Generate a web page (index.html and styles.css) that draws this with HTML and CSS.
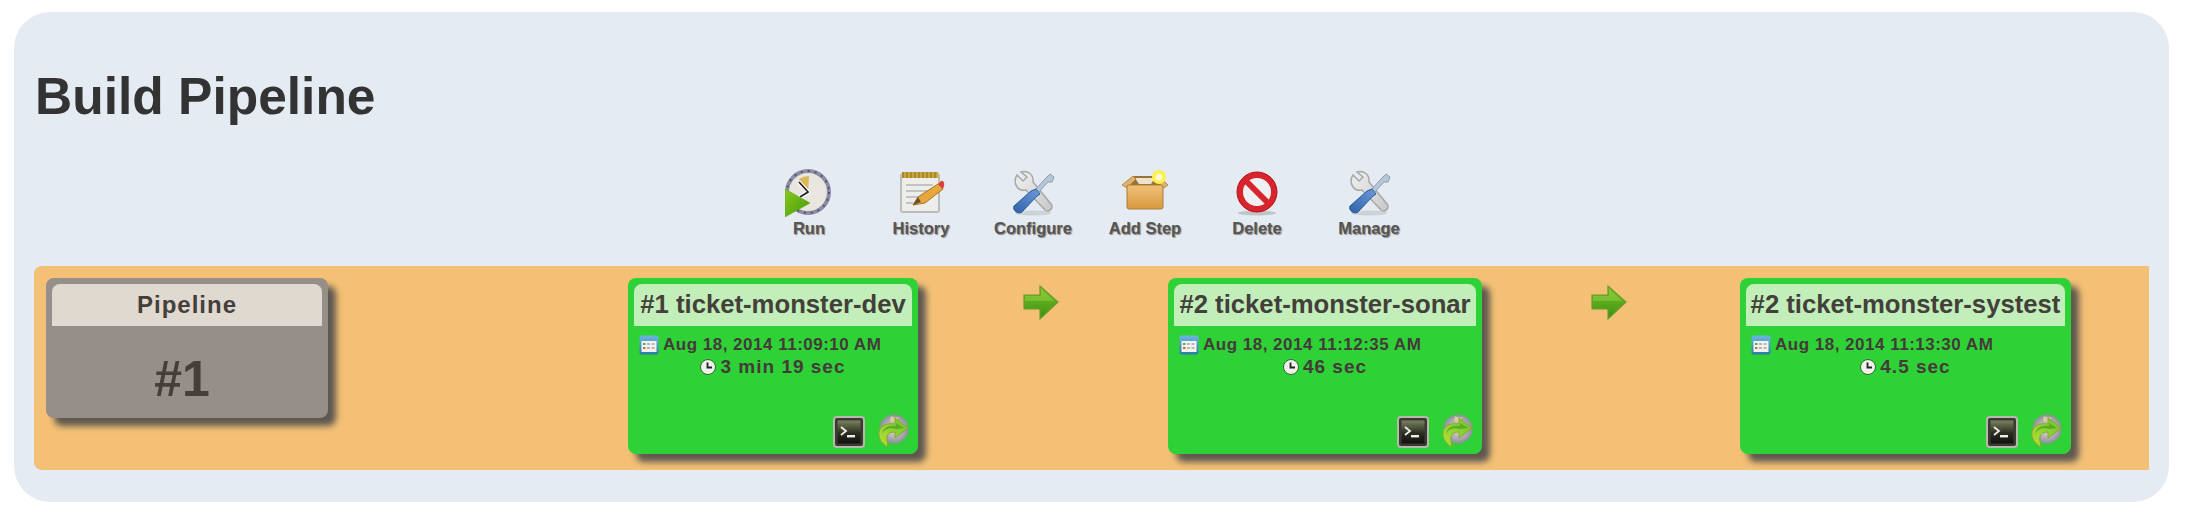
FILE: index.html
```html
<!DOCTYPE html>
<html lang="en">
<head>
<meta charset="utf-8">
<title>Build Pipeline</title>
<link rel="stylesheet" href="styles.css">
</head>
<body>
<svg class="defs" aria-hidden="true">
  <defs>
    <linearGradient id="gGreen" x1="0" y1="0" x2="1" y2="1"><stop offset="0" stop-color="#8cc820"/><stop offset="1" stop-color="#3f9a08"/></linearGradient>
    <linearGradient id="gArrow" x1="0" y1="0" x2="0" y2="1"><stop offset="0" stop-color="#7cc426"/><stop offset="1" stop-color="#3a9010"/></linearGradient>
    <linearGradient id="gBox" x1="0" y1="0" x2="0" y2="1"><stop offset="0" stop-color="#f0c078"/><stop offset="1" stop-color="#d8993f"/></linearGradient>
    <linearGradient id="gBlue" x1="0" y1="1" x2="1" y2="0"><stop offset="0" stop-color="#2f62a8"/><stop offset="1" stop-color="#6c9bd8"/></linearGradient>
    <linearGradient id="gSteel" x1="0" y1="0" x2="1" y2="1"><stop offset="0" stop-color="#f0f0f0"/><stop offset="1" stop-color="#c8c8c8"/></linearGradient>
    <linearGradient id="gTerm" x1="0" y1="0" x2="0" y2="1"><stop offset="0" stop-color="#7a8260"/><stop offset=".55" stop-color="#2b2e1f"/><stop offset="1" stop-color="#111"/></linearGradient>
    <linearGradient id="gCal" x1="0" y1="0" x2="0" y2="1"><stop offset="0" stop-color="#6cb6e0"/><stop offset="1" stop-color="#2a7ca8"/></linearGradient>
    <linearGradient id="gReplay" x1="1" y1="0" x2="0" y2="1"><stop offset="0" stop-color="#6cc42c"/><stop offset="1" stop-color="#b6e038"/></linearGradient>
    <radialGradient id="gGlobe"><stop offset="0" stop-color="#e2e2e2"/><stop offset="1" stop-color="#8f8f9a"/></radialGradient>
    <symbol id="ic-tools" viewBox="0 0 48 48">
      <ellipse cx="24" cy="44" rx="18" ry="2.5" fill="#cdd2d6"/>
      <path d="M8 6 L14 12 L18 8 L12 3 C18 1 25 5 24 13 L42 35 C45 39 40 44 36 41 L17 21 C9 23 3 14 8 6 Z" fill="url(#gSteel)" stroke="#a8a8a8" stroke-width="1.5"/>
      <path d="M41 5 L45 8 L43 13 L39 13 L29 24 L26 21 L36 10 Z" fill="#b6c6d8" stroke="#8c9cb0" stroke-width="1"/>
      <path d="M27 20 L31 25 L28 27 L13 43 C9 46 3 41 5 37 L22 22 Z" fill="url(#gBlue)" stroke="#2c5a98" stroke-width="1"/>
    </symbol>
    <symbol id="ic-arrow" viewBox="0 0 36 36">
      <path d="M1 11 H17 V2 L35 18 L17 35 V25 H1 Z" fill="url(#gArrow)" stroke="#6c9a2e" stroke-width="1.2"/>
      <path d="M2 12 H18 V5 L31 17 H2 Z" fill="#a8dc58" opacity=".35"/>
    </symbol>
    <symbol id="ic-term" viewBox="0 0 32 32">
      <rect x="1" y="1" width="30" height="30" rx="3" fill="#3a3a32" stroke="#b8b8ac" stroke-width="2"/>
      <rect x="4.5" y="4.5" width="23" height="23" fill="url(#gTerm)"/>
      <path d="M8 11 L13 15 L8 19" fill="none" stroke="#eee" stroke-width="1.8"/>
      <rect x="14" y="19" width="8" height="2.4" fill="#eee"/>
    </symbol>
    <symbol id="ic-replay" viewBox="0 0 32 34">
      <circle cx="17" cy="15" r="14.5" fill="url(#gGlobe)"/>
      <path d="M14 2 C17 4 19 4 22 3 L18 8 L13 7 Z" fill="#d9cf9a"/>
      <path d="M18 4 L31 14 L18 24 V18 C12 18 9 21 10 27 L11 33 C3 29 0 21 3 15 C6 10 12 9 18 10 Z" fill="url(#gReplay)" stroke="#8aa82a" stroke-width="1"/>
      <path d="M19 9 L27 14 L19 15 C11 13 7 16 5 20 C6 14 11 11 19 12 Z" fill="#46a420" opacity=".75"/>
    </symbol>
    <symbol id="ic-cal" viewBox="0 0 20 20">
      <rect x="0.5" y="0.5" width="19" height="19" rx="2" fill="url(#gCal)"/>
      <rect x="2.5" y="6" width="15" height="11" fill="#f3f3ee"/>
      <rect x="4" y="8" width="2.5" height="2" fill="#4caf50"/><rect x="8" y="8" width="3" height="2" fill="#b8b8b8"/><rect x="12.5" y="8" width="3" height="2" fill="#b8b8b8"/>
      <rect x="4" y="12" width="2.5" height="2" fill="#e0604c"/><rect x="8" y="12" width="3" height="2" fill="#b8b8b8"/><rect x="12.5" y="12" width="3" height="2" fill="#b8b8b8"/>
    </symbol>
    <symbol id="ic-clock" viewBox="0 0 16 16">
      <circle cx="8" cy="8" r="7.5" fill="#f0f0ea" stroke="#2f6a2c" stroke-width="1"/>
      <path d="M7.5 3.5 V8.5 H12" fill="none" stroke="#222" stroke-width="1.8"/>
    </symbol>
  </defs>
</svg>

<main class="panel">
  <h1 class="title">Build Pipeline</h1>

  <nav class="toolbar">
    <a class="tool">
      <svg class="tool-icon" viewBox="2 0 48 48">
        <circle cx="25" cy="23" r="21" fill="#e8e6de" stroke="#8d8ba6" stroke-width="4"/>
        <circle cx="25" cy="23" r="21" fill="none" stroke="#55536e" stroke-width="2" stroke-dasharray="2 5"/>
        <path d="M25 23 L16 10 A17 17 0 0 1 26 7 Z" fill="#d9b95a"/>
        <path d="M16 13 L25 23 L16 29" fill="none" stroke="#fff" stroke-width="4"/>
        <path d="M16 13 L25 23 L17 28" fill="none" stroke="#222" stroke-width="1.8"/>
        <path d="M2 20 L2 48 L27 34 Z" fill="url(#gGreen)" stroke="#6aa818" stroke-width=".6"/>
      </svg>
      <span class="tool-label">Run</span>
    </a>
    <a class="tool">
      <svg class="tool-icon" viewBox="0 0 48 48">
        <rect x="4" y="5" width="38" height="38" rx="2" fill="#ededeb" stroke="#bdbdb8" stroke-width="2"/>
        <rect x="5" y="3" width="36" height="6" fill="#c9a73f"/>
        <path d="M6 3 V9 M10 3 V9 M14 3 V9 M18 3 V9 M22 3 V9 M26 3 V9 M30 3 V9 M34 3 V9 M38 3 V9" stroke="#8f7722" stroke-width="1.2"/>
        <path d="M9 16 H36 M9 22 H30 M9 28 H22 M9 34 H16" stroke="#b5b5b5" stroke-width="1.5"/>
        <path d="M16 36 L21 28 L41 15 L46 20 L28 34 Z" fill="#e8a73c" stroke="#a87520" stroke-width="1"/>
        <path d="M41 15 L44 12 C46 11 48 14 47 17 L46 20 Z" fill="#e0403c"/>
        <path d="M16 36 L21 28 L24 33 Z" fill="#6a5030"/>
      </svg>
      <span class="tool-label">History</span>
    </a>
    <a class="tool">
      <svg class="tool-icon"><use href="#ic-tools"/></svg>
      <span class="tool-label">Configure</span>
    </a>
    <a class="tool">
      <svg class="tool-icon" viewBox="0 0 48 48">
        <path d="M5 18 L13 7 H36 L43 18 Z" fill="#9a7238"/>
        <path d="M14 9 H34 L30 15 H18 Z" fill="#e9e3d0"/>
        <path d="M1 16 L12 7 L15 10 L6 19 Z M47 16 L38 7 L34 10 L43 19 Z" fill="#e2b16a" stroke="#a97d3c" stroke-width=".8"/>
        <rect x="6" y="16" width="36" height="24" rx="2" fill="url(#gBox)" stroke="#a97d3c" stroke-width="1"/>
        <circle cx="38" cy="8" r="7" fill="#fff04a"/>
        <circle cx="38" cy="8" r="3.5" fill="#fffbd0"/>
      </svg>
      <span class="tool-label">Add Step</span>
    </a>
    <a class="tool">
      <svg class="tool-icon" viewBox="0 0 48 48">
        <ellipse cx="24" cy="44" rx="19" ry="2.5" fill="#bfc4c8"/>
        <circle cx="24" cy="23" r="17" fill="#eef0f2" stroke="#d8242c" stroke-width="6"/>
        <path d="M12 11 L36 35" stroke="#d8242c" stroke-width="6"/>
        <circle cx="24" cy="23" r="20" fill="none" stroke="#b5161e" stroke-width="1"/>
      </svg>
      <span class="tool-label">Delete</span>
    </a>
    <a class="tool">
      <svg class="tool-icon"><use href="#ic-tools"/></svg>
      <span class="tool-label">Manage</span>
    </a>
  </nav>

  <section class="pipeline">
    <article class="card card-head">
      <h2 class="card-title">Pipeline</h2>
      <div class="revision">#1</div>
    </article>

    <article class="card card-task">
      <h2 class="card-title">#1 ticket-monster-dev</h2>
      <p class="stamp"><svg class="cal"><use href="#ic-cal"/></svg>Aug 18, 2014 11:09:10 AM</p>
      <p class="duration"><svg class="clock"><use href="#ic-clock"/></svg>3 min 19 sec</p>
      <div class="actions"><svg class="term"><use href="#ic-term"/></svg><svg class="replay"><use href="#ic-replay"/></svg></div>
    </article>

    <svg class="arrow"><use href="#ic-arrow"/></svg>

    <article class="card card-task">
      <h2 class="card-title">#2 ticket-monster-sonar</h2>
      <p class="stamp"><svg class="cal"><use href="#ic-cal"/></svg>Aug 18, 2014 11:12:35 AM</p>
      <p class="duration"><svg class="clock"><use href="#ic-clock"/></svg>46 sec</p>
      <div class="actions"><svg class="term"><use href="#ic-term"/></svg><svg class="replay"><use href="#ic-replay"/></svg></div>
    </article>

    <svg class="arrow"><use href="#ic-arrow"/></svg>

    <article class="card card-task">
      <h2 class="card-title">#2 ticket-monster-systest</h2>
      <p class="stamp"><svg class="cal"><use href="#ic-cal"/></svg>Aug 18, 2014 11:13:30 AM</p>
      <p class="duration"><svg class="clock"><use href="#ic-clock"/></svg>4.5 sec</p>
      <div class="actions"><svg class="term"><use href="#ic-term"/></svg><svg class="replay"><use href="#ic-replay"/></svg></div>
    </article>
  </section>
</main>
</body>
</html>
```
FILE: styles.css
```css
* { box-sizing: border-box; }
html, body { margin: 0; background: #fff; }
body { font-family: "Liberation Sans", Arial, sans-serif; padding: 12px 17px 0 14px; }
.defs { position: absolute; width: 0; height: 0; }

.panel {
  height: 490px;
  background: #e4ebf2;
  border-radius: 36px;
  padding: 0 20px;
  display: flex;
  flex-direction: column;
}
.title {
  margin: 0;
  padding: 54px 0 0 1px;
  font-size: 51.5px;
  line-height: 60px;
  font-weight: 700;
  color: #333;
}
.toolbar {
  display: flex;
  justify-content: center;
  margin-top: 43px;
  padding-right: 5px;
}
.tool {
  width: 112px;
  display: flex;
  flex-direction: column;
  align-items: center;
}
.tool-icon { width: 48px; height: 48px; display: block; filter: blur(.5px); }
.tool-label {
  margin-top: 1px;
  font-size: 16.5px;
  line-height: 20px;
  font-weight: 700;
  color: #555;
  text-shadow: 1px 1px 1px #8a8a8a;
}

.pipeline {
  margin-top: 28px;
  height: 204px;
  background: #f3c075;
  border-radius: 8px 0 0 8px;
  padding: 12px 0 0 12px;
  display: grid;
  grid-template-columns: 282px 300px 290px 250px 314px 258px 331px;
  grid-template-rows: 176px;
  align-items: start;
}
.card {
  grid-row: 1;
  border-radius: 8px;
  padding: 6px;
  box-shadow: 8px 8px 6px #5e5850;
  color: #443f3a;
}
.card-head { grid-column: 1; height: 140px; background: #968e88; }
.card-task {
  height: 176px;
  background: #2ed136;
  display: flex;
  flex-direction: column;
}
.card-task:nth-of-type(2) { grid-column: 3; }
.card-task:nth-of-type(3) { grid-column: 5; }
.card-task:nth-of-type(4) { grid-column: 7; }
.card-title {
  margin: 0;
  height: 42px;
  line-height: 41px;
  border-radius: 8px 8px 0 0;
  text-align: center;
  font-weight: 700;
  white-space: nowrap;
}
.card-head .card-title { background: #e0d9cf; font-size: 24px; letter-spacing: 1px; }
.card-task .card-title { background: #c1eeb9; font-size: 25.7px; }
.revision {
  text-align: center;
  font-size: 50px;
  font-weight: 700;
  line-height: 60px;
  margin-top: 23px;
  padding-right: 10px;
}
.stamp, .duration { margin: 0; font-weight: 700; color: #443a3a; white-space: nowrap; }
.stamp {
  display: flex;
  align-items: center;
  padding: 9px 0 0 5px;
  font-size: 17px;
  letter-spacing: .5px;
  line-height: 20px;
}
.duration {
  display: flex;
  align-items: center;
  justify-content: center;
  padding-top: 0;
  font-size: 19px;
  letter-spacing: 1px;
  line-height: 24px;
}
.cal { width: 20px; height: 20px; margin-right: 4px; filter: blur(.4px); }
.clock { width: 16px; height: 16px; margin-right: 4px; filter: blur(.3px); }
.actions {
  margin-top: auto;
  display: flex;
  justify-content: flex-end;
  align-items: flex-end;
  gap: 12px;
  padding: 0 3px 0 0;
}
.term { width: 32px; height: 32px; filter: blur(.4px); }
.replay { width: 32px; height: 34px; filter: blur(.4px); }
.arrow {
  width: 36px;
  height: 36px;
  grid-row: 1;
  justify-self: center;
  margin: 6px 4px 0 0;
  filter: blur(.4px);
}
.pipeline > .arrow { grid-column: 4; }
.pipeline > .arrow ~ .arrow { grid-column: 6; }
```
